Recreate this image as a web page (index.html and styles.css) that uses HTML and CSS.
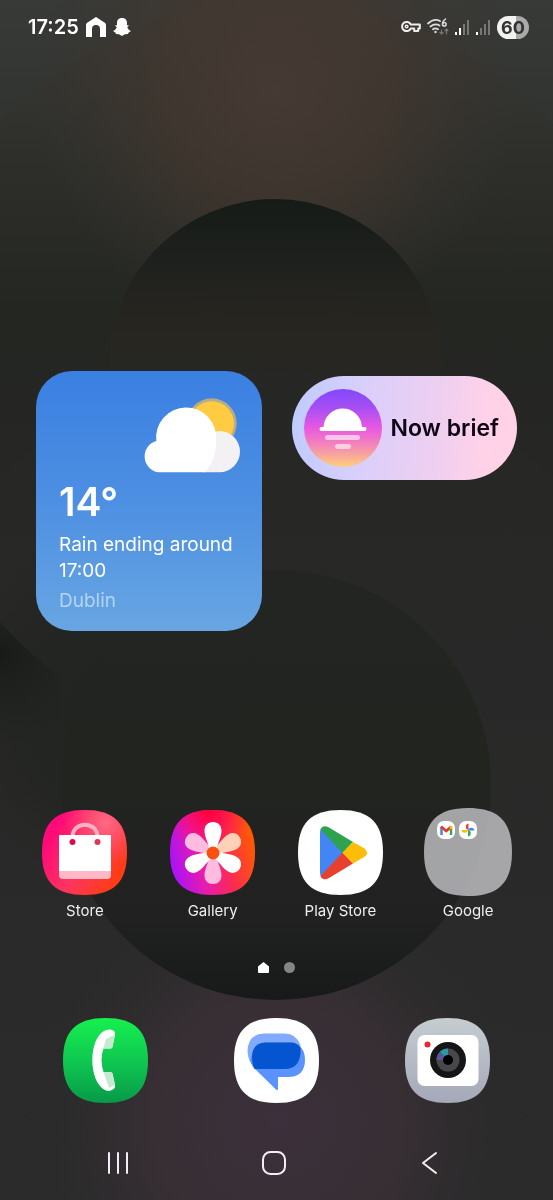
FILE: index.html
```html
<!DOCTYPE html>
<html lang="en">
<head>
    <meta charset="UTF-8">
    <meta name="viewport" content="width=device-width, initial-scale=1.0">
    <title>Home Screen</title>
    <link rel="stylesheet" href="styles.css">
</head>
<body>
    <!-- Wallpaper -->
    <svg class="wallpaper" viewBox="0 0 553 1200" preserveAspectRatio="xMidYMid slice" aria-hidden="true">
        <defs>
            <linearGradient id="w-base" x1="0" y1="0" x2="0" y2="1">
                <stop offset="0" stop-color="#383a37"/>
                <stop offset="0.3" stop-color="#242622"/>
                <stop offset="0.55" stop-color="#282827"/>
                <stop offset="0.8" stop-color="#2a2a2a"/>
                <stop offset="1" stop-color="#2b2b2c"/>
            </linearGradient>
            <linearGradient id="w-ring" gradientUnits="userSpaceOnUse" x1="0" y1="0" x2="0" y2="520">
                <stop offset="0" stop-color="#3b3935"/>
                <stop offset="0.3" stop-color="#2e2f2b"/>
                <stop offset="0.6" stop-color="#242622"/>
                <stop offset="1" stop-color="#272726" stop-opacity="0"/>
            </linearGradient>
            <linearGradient id="w-hole" gradientUnits="userSpaceOnUse" x1="0" y1="199" x2="0" y2="480">
                <stop offset="0" stop-color="#151b16"/>
                <stop offset="0.25" stop-color="#20211e"/>
                <stop offset="0.5" stop-color="#292620" stop-opacity="0.9"/>
                <stop offset="0.7" stop-color="#272726" stop-opacity="0"/>
            </linearGradient>
            <linearGradient id="w-disc" gradientUnits="userSpaceOnUse" x1="0" y1="570" x2="0" y2="1000">
                <stop offset="0" stop-color="#232522"/>
                <stop offset="0.5" stop-color="#222420"/>
                <stop offset="0.8" stop-color="#212122"/>
                <stop offset="1" stop-color="#171a18"/>
            </linearGradient>
            <radialGradient id="w-glow-top" gradientUnits="userSpaceOnUse" cx="276" cy="90" r="240">
                <stop offset="0" stop-color="#483b34" stop-opacity="0.9"/>
                <stop offset="0.5" stop-color="#42372f" stop-opacity="0.7"/>
                <stop offset="1" stop-color="#3a3530" stop-opacity="0"/>
            </radialGradient>
            <radialGradient id="w-glow-bottom" gradientUnits="userSpaceOnUse" cx="276" cy="1120" r="250">
                <stop offset="0" stop-color="#3b303b"/>
                <stop offset="0.5" stop-color="#392f35" stop-opacity="0.9"/>
                <stop offset="1" stop-color="#2b2b2b" stop-opacity="0"/>
            </radialGradient>
            <radialGradient id="w-shade" gradientUnits="userSpaceOnUse" cx="0" cy="655" r="90">
                <stop offset="0" stop-color="#171b18"/>
                <stop offset="1" stop-color="#1f211f" stop-opacity="0"/>
            </radialGradient>
            <radialGradient id="w-blend" gradientUnits="userSpaceOnUse" cx="120" cy="710" r="190">
                <stop offset="0" stop-color="#222421"/>
                <stop offset="0.5" stop-color="#232522"/>
                <stop offset="1" stop-color="#262725" stop-opacity="0"/>
            </radialGradient>
        </defs>
        <rect width="553" height="1200" fill="url(#w-base)"/>
        <circle cx="276" cy="374" r="373" fill="url(#w-ring)"/>
        <circle cx="276" cy="785" r="415" fill="#30312e" opacity="0.1"/>
        <rect width="553" height="340" fill="url(#w-glow-top)"/>
        <rect y="860" width="553" height="340" fill="url(#w-glow-bottom)"/>
        <circle cx="275" cy="365" r="166" fill="url(#w-hole)"/>
        <rect y="520" width="320" height="390" fill="url(#w-blend)"/>
        <path d="M0 622Q40 665 60 675V760H0Z" fill="url(#w-shade)"/>
        <circle cx="276" cy="785" r="215" fill="url(#w-disc)"/>
    </svg>

    <header class="status-bar">
        <div class="status-left">
            <time class="clock">17:25</time>
            <svg width="22" height="20" viewBox="0 0 22 20" fill="#fff" aria-hidden="true">
                <path d="M1 20V8Q1 6.500 2.200 5.700L11 0L19.800 5.700Q21 6.500 21 8V20H15V12Q15 8 11 8T7 12V20Z"/>
            </svg>
            <svg width="18" height="18" viewBox="0 0 18 18" fill="#fff" aria-hidden="true">
                <path d="M9 0C12.500 0 14 2.300 14 5V7.200L16 7.500L14.200 9.500Q15.400 12 18 13L15.700 14.600L15 16L12 16.200L9 18L6 16.200L3 16L2.300 14.600L0 13Q2.600 12 3.800 9.500L2 7.500L4 7.200V5C4 2.300 5.500 0 9 0Z"/>
            </svg>
        </div>
        <div class="status-right">
            <svg width="20" height="14" viewBox="0 0 20 14" fill="none" stroke="#eee" stroke-width="2" stroke-linejoin="round" aria-hidden="true">
                <path d="M9.800 4.500H18.800V8.500H17.200V11H13.200V8.500H9.800A4.600 4.600 0 1 1 9.800 4.500Z"/>
                <circle cx="5.600" cy="6.500" r="1.300" stroke-width="1.500"/>
            </svg>
            <svg width="22" height="18" viewBox="0 0 22 18" fill="none" stroke="#ddd" stroke-width="1.800" stroke-linecap="round" aria-hidden="true">
                <path d="M1 5.500Q7 0 13 3M3.500 8.500Q8 5 12.500 7.500M6 11.300Q8.500 9.500 11 11.300"/>
                <circle cx="8.500" cy="14" r="1.200" fill="#ddd" stroke="none"/>
                <path d="M18.500 1Q15.500 3 15.500 6" stroke-width="1.500"/>
                <circle cx="17.300" cy="6.200" r="1.800" stroke-width="1.500"/>
                <path d="M14.500 12V16M13 14.500L14.500 16L16 14.500M19.500 16V11M18 12.500L19.500 11L21 12.500" stroke="#777" stroke-width="1.200"/>
            </svg>
            <svg width="15" height="16" viewBox="0 0 15 16" aria-hidden="true">
                <path d="M0 13H2V16H0ZM4 9H6V16H4Z" fill="#fff"/>
                <path d="M8 5H10V16H8ZM12 1H14V16H12Z" fill="#777"/>
            </svg>
            <svg width="15" height="16" viewBox="0 0 15 16" aria-hidden="true">
                <path d="M0 13H2V16H0Z" fill="#fff"/>
                <path d="M4 9H6V16H4ZM8 5H10V16H8ZM12 1H14V16H12Z" fill="#777"/>
            </svg>
            <span class="battery">60</span>
        </div>
    </header>

    <main>
        <section class="widgets">
            <article class="weather">
                <svg class="weather-icon" viewBox="0 0 291 224" aria-hidden="true">
                    <circle cx="206" cy="76" r="75" fill="#b4ad85"/>
                    <circle cx="206" cy="77" r="67" fill="#ffcb42"/>
                    <path d="M180 223V130Q200 99 229 99A62 62 0 0 1 229 223Z" fill="#f4f1f5"/>
                    <path d="M48 223A48 48 0 0 1 40 129A90 90 0 1 1 219 126Q220 190 184 223Z" fill="#fff"/>
                </svg>
                <p class="temperature">14°</p>
                <p class="forecast">Rain ending around 17:00</p>
                <p class="city">Dublin</p>
            </article>
            <button type="button" class="brief">
                <svg class="brief-icon" viewBox="0 0 78 78" aria-hidden="true">
                    <defs>
                        <linearGradient id="b-sky" x1="0" y1="0" x2="0" y2="1">
                            <stop offset="0" stop-color="#8249fb"/>
                            <stop offset="0.25" stop-color="#a94ef3"/>
                            <stop offset="0.5" stop-color="#e858e2"/>
                            <stop offset="0.75" stop-color="#f58cb3"/>
                            <stop offset="1" stop-color="#fdd078"/>
                        </linearGradient>
                    </defs>
                    <circle cx="39" cy="39" r="39" fill="url(#b-sky)"/>
                    <path d="M19.500 38A19.300 20 0 0 1 58 38H60.500A2 2 0 0 1 60.500 42H17.500A2 2 0 0 1 17.500 38Z" fill="#fff"/>
                    <rect x="21" y="46" width="35" height="5" rx="2.500" fill="#fff" opacity="0.6"/>
                    <rect x="31" y="55" width="16" height="5" rx="2.500" fill="#fff" opacity="0.6"/>
                </svg>
                <span>Now brief</span>
            </button>
        </section>

        <nav class="apps" aria-label="Apps">
            <button type="button" class="app">
                <svg class="icon" viewBox="0 0 85 85" aria-hidden="true">
                    <defs>
                        <linearGradient id="s-bg" x1="0.1" y1="0.3" x2="0.9" y2="0.75">
                            <stop offset="0" stop-color="#ff0a78"/>
                            <stop offset="0.5" stop-color="#fd3560"/>
                            <stop offset="1" stop-color="#ff3c16"/>
                        </linearGradient>
                        <radialGradient id="s-light" cx="0.75" cy="0.15" r="0.5">
                            <stop offset="0" stop-color="#ff6a85"/>
                            <stop offset="1" stop-color="#ff5070" stop-opacity="0"/>
                        </radialGradient>
                        <path id="squircle" d="M0 42.500C0 13 13 0 42.500 0S85 13 85 42.500S72 85 42.500 85S0 72 0 42.500Z"/>
                    </defs>
                    <use href="#squircle" fill="url(#s-bg)"/>
                    <use href="#squircle" fill="url(#s-light)"/>
                    <path d="M30.500 27C30.500 10.500 55.500 10.500 55.500 27" fill="none" stroke="#ffb0c5" stroke-width="4"/>
                    <path d="M17 61H69V65Q69 69 65 69H21Q17 69 17 65Z" fill="#ffb8c8"/>
                    <path d="M18 25H68Q69 25 69 26V61H17V26Q17 25 18 25Z" fill="#fff"/>
                    <circle cx="30.500" cy="32" r="3" fill="#d90b52"/>
                    <circle cx="55.500" cy="32" r="3" fill="#e63350"/>
                </svg>
                <span class="app-name">Store</span>
            </button>
            <button type="button" class="app">
                <svg class="icon" viewBox="0 0 85 85" aria-hidden="true">
                    <defs>
                        <linearGradient id="g-bg" x1="0" y1="0.7" x2="1" y2="0.45">
                            <stop offset="0" stop-color="#a312ff"/>
                            <stop offset="0.35" stop-color="#e81cac"/>
                            <stop offset="0.65" stop-color="#fa2a55"/>
                            <stop offset="1" stop-color="#ff5a00"/>
                        </linearGradient>
                        <radialGradient id="g-top" cx="0.45" cy="0" r="0.5">
                            <stop offset="0" stop-color="#ff0038"/>
                            <stop offset="1" stop-color="#ff0070" stop-opacity="0"/>
                        </radialGradient>
                        <path id="petal" d="M39 38C38 32 34.500 27 34.500 20.500C34.500 15.500 38 12 43 12S51.500 15.500 51.500 20.500C51.500 27 48 32 47 38L43 43Z"/>
                    </defs>
                    <use href="#squircle" fill="url(#g-bg)"/>
                    <use href="#squircle" fill="url(#g-top)"/>
                    <use href="#petal" fill="#ffd2b8" transform="rotate(60 43 43)"/>
                    <use href="#petal" fill="#ffbce0" transform="rotate(180 43 43)"/>
                    <use href="#petal" fill="#ffbce0" transform="rotate(300 43 43)"/>
                    <use href="#petal" fill="#fff"/>
                    <use href="#petal" fill="#fff" transform="rotate(120 43 43)"/>
                    <use href="#petal" fill="#fff" transform="rotate(240 43 43)"/>
                    <circle cx="43" cy="43" r="6.500" fill="#fb5012"/>
                </svg>
                <span class="app-name">Gallery</span>
            </button>
            <button type="button" class="app">
                <svg class="icon" viewBox="0 0 85 85" aria-hidden="true">
                    <use href="#squircle" fill="#fff"/>
                    <path d="M24 17.500Q22 19 22 22V63Q22 66 24 68L45 42.700Z" fill="#4285f4"/>
                    <path d="M22.500 19.500Q25 14 31 17.500L55 32L44.500 43Z" fill="#2fa24f"/>
                    <path d="M22.500 66Q25 71.500 31 68L55 53.500L44.500 42.500Z" fill="#e8402f"/>
                    <path d="M55 32L66 38.200Q72.500 42.700 66 47L55 53.500L44.500 42.700Z" fill="#fcbc07"/>
                </svg>
                <span class="app-name">Play Store</span>
            </button>
            <button type="button" class="app">
                <svg class="icon folder" viewBox="0 0 88 88" aria-hidden="true">
                    <path d="M0 44C0 13.500 13.500 0 44 0S88 13.500 88 44S74.500 88 44 88S0 74.500 0 44Z" fill="#dcdce0" fill-opacity="0.7"/>
                    <rect x="13" y="13" width="18" height="18" rx="7" fill="#fff"/>
                    <path d="M17.500 27V19" stroke="#4285f4" stroke-width="2.500"/>
                    <path d="M27 27V19" stroke="#34a853" stroke-width="2.500"/>
                    <path d="M17 18.500L22.200 23L27.500 18.500" fill="none" stroke="#e23b2e" stroke-width="2.800"/>
                    <path d="M27 18V21" stroke="#fbbc04" stroke-width="2.500"/>
                    <rect x="35" y="13" width="18" height="18" rx="7" fill="#fff"/>
                    <path d="M44.500 22V15.500A3.300 3.300 0 0 0 44.500 22Z" fill="#ea4335"/>
                    <path d="M44 22.500H50.500A3.300 3.300 0 0 0 44 22.500Z" fill="#4285f4"/>
                    <path d="M44 22V28.500A3.300 3.300 0 0 0 44 22Z" fill="#34a853"/>
                    <path d="M44 22H37.500A3.300 3.300 0 0 0 44 22Z" fill="#fbbc04"/>
                </svg>
                <span class="app-name">Google</span>
            </button>
        </nav>

        <div class="pages" aria-hidden="true">
            <svg width="11" height="11" viewBox="0 0 11 11"><path d="M0 10V4.500L5.500 0L11 4.500V10Q11 11 10 11H1Q0 11 0 10Z" fill="#fff"/></svg>
            <span class="page-dot"></span>
        </div>
    </main>

    <footer>
        <nav class="dock" aria-label="Favourites">
            <button type="button" class="app" aria-label="Phone">
                <svg class="icon" viewBox="0 0 85 85" aria-hidden="true">
                    <defs>
                        <linearGradient id="p-bg" x1="0" y1="0" x2="0" y2="1">
                            <stop offset="0" stop-color="#16f04f"/>
                            <stop offset="0.5" stop-color="#0fc850"/>
                            <stop offset="1" stop-color="#079a48"/>
                        </linearGradient>
                    </defs>
                    <use href="#squircle" fill="url(#p-bg)"/>
                    <path d="M46 11.500Q49 11 51 13Q52.500 14 52 17L49.500 29Q49 30.500 47 30.500H40.500Q38.500 36 38.500 42T40.500 54H47Q49 54 49.500 55.500L52 67Q52.500 70 50 71.500Q46 74 42 72C34 68 29.300 56 29.300 42S34 17 41 13Q43 11.700 46 11.500Z" fill="#fff"/>
                    <path d="M43 21L51.500 17L49.500 29Q49 30.500 47 30.500H40.500ZM40.500 54H47Q49 54 49.500 55.500L52 67L46 70Z" fill="#c5e9d1"/>
                </svg>
            </button>
            <button type="button" class="app" aria-label="Messages">
                <svg class="icon" viewBox="0 0 85 85" aria-hidden="true">
                    <use href="#squircle" fill="#fff"/>
                    <path d="M30 15.500H51Q62 15.500 66.500 27V42L24 52Q13.500 45 13.500 33Q14 16 30 15.500Z" fill="#82abff"/>
                    <path d="M31 24.500H58Q71 28 71 41.500Q71 59 54 59H44V71Q43.500 73 42 71.500L19 49Q14 41 18 37Q20 25 31 24.500Z" fill="#5a92ff"/>
                    <path d="M31 24.500H58Q64 25 66.500 30V35Q65 51 51 51H20.500Q18 46 18 38Q19 25 31 24.500Z" fill="#0655d0"/>
                </svg>
            </button>
            <button type="button" class="app" aria-label="Camera">
                <svg class="icon" viewBox="0 0 85 85" aria-hidden="true">
                    <defs>
                        <linearGradient id="c-bg" x1="0" y1="0" x2="0" y2="1">
                            <stop offset="0" stop-color="#c5cdd0"/>
                            <stop offset="1" stop-color="#a5a8b8"/>
                        </linearGradient>
                    </defs>
                    <use href="#squircle" fill="url(#c-bg)"/>
                    <rect x="12.500" y="17" width="61" height="51" rx="7" fill="#fff"/>
                    <circle cx="22.500" cy="26.500" r="3" fill="#ea2530"/>
                    <circle cx="43" cy="42" r="18" fill="#151515"/>
                    <circle cx="43" cy="42" r="11.500" fill="#48484c"/>
                    <path d="M43 42H31.500A11.500 11.500 0 0 1 35 33.700Z" fill="#5b5794"/>
                    <path d="M43 42L35 33.700A11.500 11.500 0 0 1 43 30.500Z" fill="#259aa8"/>
                    <circle cx="43" cy="42" r="5" fill="#000"/>
                </svg>
            </button>
        </nav>
        <nav class="system-nav" aria-label="System">
            <button type="button" aria-label="Recent apps">
                <svg width="24" height="24" viewBox="0 0 24 24" fill="none" stroke="#f3eef5" stroke-width="2" stroke-linecap="round" aria-hidden="true">
                    <path d="M3 2V22M12 2V22M21 2V22"/>
                </svg>
            </button>
            <button type="button" aria-label="Home">
                <svg width="24" height="24" viewBox="0 0 24 24" fill="none" stroke="#f3eef5" stroke-width="2" aria-hidden="true">
                    <rect x="1" y="1" width="22" height="22" rx="7.500"/>
                </svg>
            </button>
            <button type="button" aria-label="Back">
                <svg width="24" height="24" viewBox="0 0 24 24" fill="none" stroke="#f3eef5" stroke-width="2" stroke-linecap="round" stroke-linejoin="round" aria-hidden="true">
                    <path d="M17 2L4 12L17 22"/>
                </svg>
            </button>
        </nav>
    </footer>
</body>
</html>
```

FILE: styles.css
```css
* {
    box-sizing: border-box;
}

body {
    font-family: Inter, Roboto, sans-serif;
    display: flex;
    flex-direction: column;
    min-height: 100vh;
    margin: 0;
    color: #fff;
    background-color: #282828;
}

/* fills the window behind everything else */
.wallpaper {
    position: fixed;
    inset: 0;
    z-index: -1;
    width: 100%;
    height: 100%;
}

button {
    padding: 0;
    border: none;
    background: none;
    color: inherit;
    font-family: inherit;
    cursor: pointer;
}

svg {
    display: block;
}

p {
    margin: 0;
}

.status-bar {
    display: flex;
    justify-content: space-between;
    align-items: center;
    height: 54px;
    padding: 0 24px 0 28px;
}

.status-left,
.status-right {
    display: flex;
    align-items: center;
    gap: 6px;
}

.clock {
    font-size: 20px;
    font-weight: 600;
}

.battery {
    width: 32px;
    border-radius: 12px;
    background: linear-gradient(90deg, #f2f2f0 60%, #aaa 60%);
    color: #333;
    font-size: 18px;
    font-weight: 700;
    line-height: 23px;
    text-align: center;
}

main {
    padding: 317px 21px 0;
}

.widgets {
    display: grid;
    grid-template-columns: 1fr 1fr;
    align-items: start;
}

.weather {
    display: flex;
    flex-direction: column;
    height: 260px;
    margin: 0 15px;
    padding: 27px 22px 16px 23px;
    border-radius: 36px;
    background: linear-gradient(#3a80e2, #4d8fe2 50%, #68a6e2);
}

.weather-icon {
    align-self: flex-end;
    width: 97px;
}

.temperature {
    margin-top: 7px;
    font-size: 39px;
    font-weight: 600;
    line-height: 44px;
}

.forecast {
    margin-top: 8px;
    font-size: 19px;
    line-height: 26px;
}

.city {
    margin-top: 4px;
    color: #b4d4f4;
    font-size: 19px;
    line-height: 26px;
}

.brief {
    display: flex;
    align-items: center;
    gap: 9px;
    height: 104px;
    margin: 5px 15px 0;
    padding-left: 12px;
    border-radius: 52px;
    background: linear-gradient(95deg, #becbff, #dccffa 35%, #efcff0 65%, #ffd2e8 85%);
    color: #100516;
    font-size: 23px;
    font-weight: 600;
}

.brief-icon {
    width: 78px;
}

.apps {
    display: grid;
    grid-template-columns: repeat(4, 1fr);
    margin-top: 177px;
}

.app {
    display: flex;
    flex-direction: column;
    align-items: center;
    justify-content: space-between;
}

.apps .app {
    height: 113px;
}

.icon {
    width: 85px;
    margin-top: 2px;
}

.folder {
    width: 88px;
    margin-top: 0;
}

.app-name {
    color: #eee;
    font-size: 15px;
    line-height: 20px;
}

.pages {
    display: flex;
    justify-content: center;
    align-items: center;
    gap: 15px;
    margin-top: 41px;
}

.page-dot {
    width: 11px;
    height: 11px;
    border-radius: 50%;
    background-color: #858585;
}

footer {
    margin-top: 43px;
}

.dock {
    display: grid;
    grid-template-columns: repeat(3, 1fr);
    padding: 0 20px;
}

.system-nav {
    display: grid;
    grid-template-columns: repeat(3, 1fr);
    margin-top: 36px;
    padding: 0 44px 0 40px;
}

.system-nav button {
    display: flex;
    justify-content: center;
    padding: 12px 0;
}
```
